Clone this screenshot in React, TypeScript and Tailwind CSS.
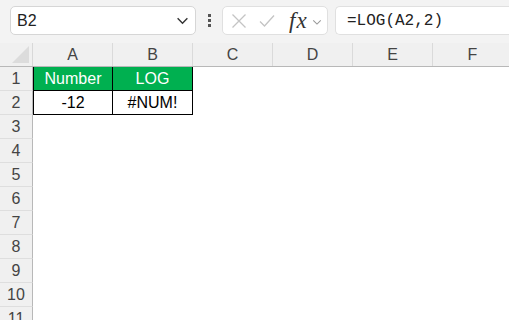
import React from "react";

const cols = ["A", "B", "C", "D", "E", "F"];
const rows = [1, 2, 3, 4, 5, 6, 7, 8, 9, 10, 11];

const Chevron = ({ size = 12, color = "#333" }: { size?: number; color?: string }) => (
  <svg width={size} height={size} viewBox="0 0 12 12" fill="none">
    <path d="M1.5 4 L6 8.5 L10.5 4" stroke={color} strokeWidth="1.3" />
  </svg>
);

const cellFor = (row: number, col: string) => {
  if (row === 1 && col === "A") return { text: "Number", head: true };
  if (row === 1 && col === "B") return { text: "LOG", head: true };
  if (row === 2 && col === "A") return { text: "-12", head: false };
  if (row === 2 && col === "B") return { text: "#NUM!", head: false };
  return null;
};

export default function App() {
  return (
    <div className="h-screen w-full overflow-hidden bg-white font-['Liberation_Sans',sans-serif]">
      {/* formula bar */}
      <div className="flex h-[43px] items-start bg-[#f3f3f3] pt-[6px] pl-[10px]">
        <div className="flex h-[29px] w-[186px] items-center justify-between rounded-[5px] border border-[#d6d6d6] bg-white pl-[6px] pr-[6px]">
          <span className="text-[16px] text-[#222]">B2</span>
          <Chevron size={13} color="#333" />
        </div>
        <div className="flex h-[29px] w-[26px] flex-col items-center justify-center gap-[2px]">
          <span className="h-[3px] w-[3px] bg-[#555]" />
          <span className="h-[3px] w-[3px] bg-[#555]" />
          <span className="h-[3px] w-[3px] bg-[#555]" />
        </div>
        <div className="flex h-[29px] w-[106px] items-center rounded-[5px] border border-[#e0e0e0] bg-white">
          <svg width="16" height="16" viewBox="0 0 16 16" className="ml-[8px]">
            <path d="M1.5 1.5 L14.5 14.5 M14.5 1.5 L1.5 14.5" stroke="#c4c4c4" strokeWidth="1.3" />
          </svg>
          <svg width="16" height="14" viewBox="0 0 16 14" className="ml-[12px]">
            <path d="M1 7.5 L5.5 12 L15 1.5" stroke="#c4c4c4" strokeWidth="1.3" fill="none" />
          </svg>
          <span className="ml-[14px] font-['Liberation_Serif',serif] text-[23px] italic leading-none tracking-[1px] text-[#333]">
            fx
          </span>
          <span className="ml-[4px] mt-[2px]">
            <Chevron size={10} color="#999" />
          </span>
        </div>
        <div className="ml-[7px] flex h-[29px] flex-1 items-center rounded-l-[5px] border border-r-0 border-[#e0e0e0] bg-white pl-[11px]">
          <span className="font-['Liberation_Mono',monospace] text-[16px] text-[#222]">=LOG(A2,2)</span>
        </div>
      </div>

      {/* column headers */}
      <div className="flex h-[24px] border-b border-[#b8b8b8] bg-[#f0f0f0]">
        <div className="flex h-full w-[33px] shrink-0 items-end justify-end border-r border-[#d8d8d8] pr-[3px] pb-[3px]">
          <svg width="17" height="17" viewBox="0 0 17 17">
            <path d="M17 0 L17 17 L0 17 Z" fill="#dcdcdc" />
          </svg>
        </div>
        {cols.map((c) => (
          <div
            key={c}
            className="flex h-full w-[80px] shrink-0 items-center justify-center border-r border-[#dadada] text-[16px] text-[#444]"
          >
            {c}
          </div>
        ))}
      </div>

      {/* rows */}
      {rows.map((r) => (
        <div key={r} className="flex h-[24px]">
          <div className="flex h-full w-[33px] shrink-0 items-center justify-center border-r border-b border-r-[#b8b8b8] border-b-[#dedede] bg-[#f0f0f0] text-[16px] text-[#444]">
            {r}
          </div>
          {cols.map((c) => {
            const cell = cellFor(r, c);
            if (!cell) return <div key={c} className="h-full w-[80px] shrink-0" />;
            return (
              <div
                key={c}
                className={`flex h-full w-[80px] shrink-0 items-center justify-center border-r border-b border-black text-[16px] ${
                  cell.head ? "bg-[#00b050] text-white" : "bg-white text-black"
                } ${c === "A" ? "border-l" : ""}`}
              >
                {cell.text}
              </div>
            );
          })}
        </div>
      ))}
    </div>
  );
}
